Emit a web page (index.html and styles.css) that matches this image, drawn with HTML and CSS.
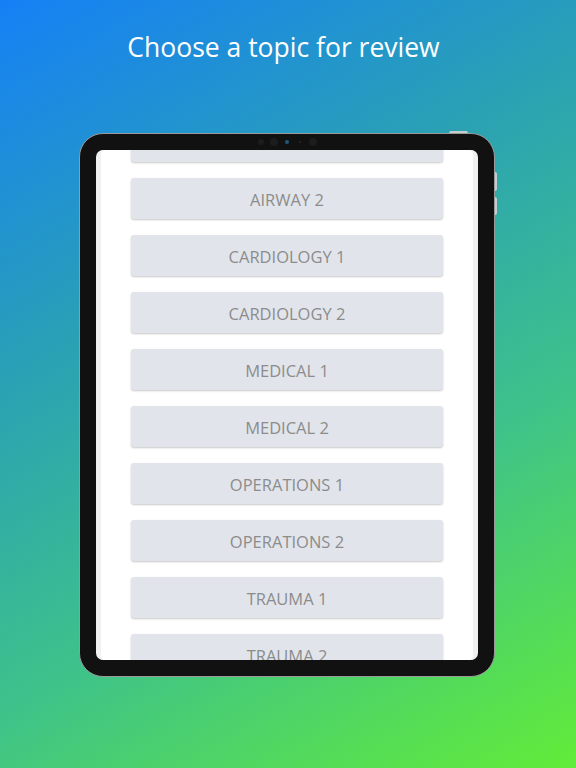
FILE: index.html
```html
<!DOCTYPE html>
<html>
<head>
<meta charset="utf-8">
<link rel="stylesheet" href="styles.css">
</head>
<body>
<div class="page">
  <h1 class="title">Choose a topic for review</h1>
  <div class="device">
    <span class="btn-top"></span>
    <span class="btn-side btn-side-1"></span>
    <span class="btn-side btn-side-2"></span>
    <div class="camera">
      <span class="slot"><span class="dot"></span></span>
      <span class="slot"><span class="dot big"></span></span>
      <span class="slot"><span class="dot lens"></span></span>
      <span class="slot"><span class="dot tiny"></span></span>
      <span class="slot"><span class="dot big"></span></span>
    </div>
    <div class="screen">
      <div class="list">
        <div class="topic">AIRWAY 1</div>
        <div class="topic">AIRWAY 2</div>
        <div class="topic">CARDIOLOGY 1</div>
        <div class="topic">CARDIOLOGY 2</div>
        <div class="topic">MEDICAL 1</div>
        <div class="topic">MEDICAL 2</div>
        <div class="topic">OPERATIONS 1</div>
        <div class="topic">OPERATIONS 2</div>
        <div class="topic">TRAUMA 1</div>
        <div class="topic">TRAUMA 2</div>
      </div>
    </div>
  </div>
</div>
</body>
</html>
```
FILE: styles.css
```css
html, body {
  margin: 0;
  padding: 0;
}
body {
  width: 576px;
  height: 768px;
  overflow: hidden;
  background: linear-gradient(150deg, #1580f6 0%, #2aa1b4 35%, #3fc28a 65%, #62ec38 100%);
  font-family: "Open Sans", "Liberation Sans", sans-serif;
}
.page {
  display: flex;
  flex-direction: column;
  align-items: center;
}
.title {
  margin: 28px 9px 0 0;
  height: 38px;
  line-height: 38px;
  font-size: 26.5px;
  font-weight: 400;
  color: #ffffff;
  letter-spacing: 0;
}
.device {
  position: relative;
  margin: 67px 0 0 -2px;
  width: 416px;
  height: 544px;
  box-sizing: border-box;
  padding: 16px;
  background: #111111;
  border: 1px solid #9a9a9a;
  border-radius: 24px;
  display: flex;
}
.btn-top {
  position: absolute;
  top: -3px;
  left: 369px;
  width: 19px;
  height: 2px;
  background: #c4cccd;
  border-radius: 2px 2px 0 0;
}
.btn-side {
  position: absolute;
  right: -3px;
  width: 2px;
  background: #c4cccd;
  border-radius: 0 2px 2px 0;
}
.btn-side-1 { top: 38px; height: 19px; }
.btn-side-2 { top: 63px; height: 18px; }
.camera {
  position: absolute;
  top: 4px;
  left: 0;
  right: 0;
  height: 8px;
  display: flex;
  justify-content: center;
  align-items: center;
}
.slot {
  width: 13px;
  height: 8px;
  display: flex;
  justify-content: center;
  align-items: center;
}
.dot {
  width: 6px;
  height: 6px;
  border-radius: 50%;
  background: #1c1c1c;
}
.dot.big { width: 8px; height: 8px; }
.dot.lens { width: 4px; height: 4px; background: #1d5a7a; }
.dot.tiny { width: 2px; height: 2px; background: #2a2a2a; }
.screen {
  flex: 1;
  background: #ffffff;
  border-left: 5px solid #f1f1f1;
  border-right: 5px solid #f1f1f1;
  border-radius: 7px;
  overflow: hidden;
}
.list {
  margin-top: -29px;
  display: flex;
  flex-direction: column;
  align-items: center;
  gap: 16px;
}
.topic {
  width: 312px;
  height: 41px;
  flex-shrink: 0;
  display: flex;
  align-items: center;
  justify-content: center;
  padding-top: 1px;
  box-sizing: border-box;
  background: #e1e5eb;
  border-radius: 3px;
  box-shadow: 0 1px 2px rgba(0, 0, 0, 0.22);
  color: #8c8c8c;
  font-size: 16.5px;
  font-family: "Open Sans", "Liberation Sans", sans-serif;
}
```
